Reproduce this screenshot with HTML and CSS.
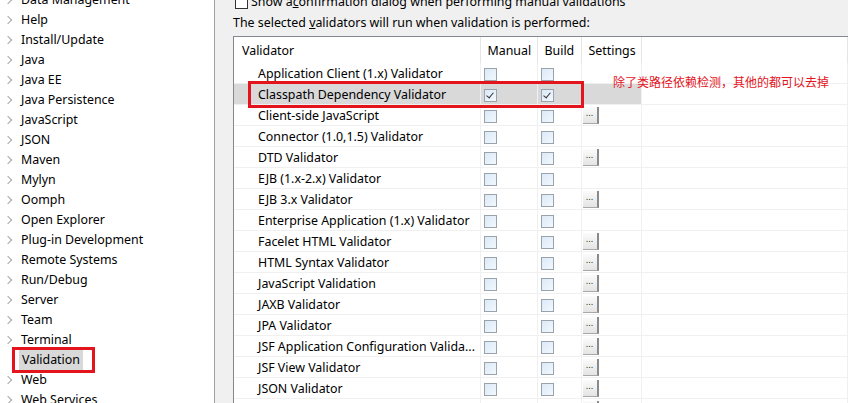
FILE: index.html
```html
<!DOCTYPE html>
<html lang="zh-CN">
<head>
    <meta charset="UTF-8">
    <title>Preferences - Validation</title>
    <link rel="stylesheet" href="styles.css">
</head>
<body>
    <div class="tree">
        <ul class="tree-list">
            <li><span class="chev"></span>Data Management</li>
            <li><span class="chev"></span>Help</li>
            <li><span class="chev"></span>Install/Update</li>
            <li><span class="chev"></span>Java</li>
            <li><span class="chev"></span>Java EE</li>
            <li><span class="chev"></span>Java Persistence</li>
            <li><span class="chev"></span>JavaScript</li>
            <li><span class="chev"></span>JSON</li>
            <li><span class="chev"></span>Maven</li>
            <li><span class="chev"></span>Mylyn</li>
            <li><span class="chev"></span>Oomph</li>
            <li><span class="chev"></span>Open Explorer</li>
            <li><span class="chev"></span>Plug-in Development</li>
            <li><span class="chev"></span>Remote Systems</li>
            <li><span class="chev"></span>Run/Debug</li>
            <li><span class="chev"></span>Server</li>
            <li><span class="chev"></span>Team</li>
            <li><span class="chev"></span>Terminal</li>
            <li class="leaf"><span class="sel-box"><span class="sel">Validation</span></span></li>
            <li><span class="chev"></span>Web</li>
            <li><span class="chev"></span>Web Services</li>
        </ul>
    </div>

    <div class="main">
        <div class="confirm"><span class="cb plain"></span>Show a <u>c</u>onfirmation dialog when performing manual validations</div>
        <div class="intro">The selected <u>v</u>alidators will run when validation is performed:</div>

        <div class="table-wrap">
            <table class="validators">
                <colgroup>
                    <col class="c-name">
                    <col class="c-manual">
                    <col class="c-build">
                    <col class="c-settings">
                    <col>
                </colgroup>
                <thead>
                    <tr>
                        <th class="first">Validator</th>
                        <th>Manual</th>
                        <th>Build</th>
                        <th>Settings</th>
                        <th></th>
                    </tr>
                </thead>
                <tbody id="rows"></tbody>
            </table>
            <div class="mark-row"></div>
            <div class="note">除了类路径依赖检测，其他的都可以去掉</div>
        </div>
    </div>

    <script>
        // Liste des validateurs : nom, coché, bouton de réglages
        const validators = [
            ['Application Client (1.x) Validator', false, false],
            ['Classpath Dependency Validator', true, false],
            ['Client-side JavaScript', false, true],
            ['Connector (1.0,1.5) Validator', false, false],
            ['DTD Validator', false, true],
            ['EJB (1.x-2.x) Validator', false, false],
            ['EJB 3.x Validator', false, true],
            ['Enterprise Application (1.x) Validator', false, false],
            ['Facelet HTML Validator', false, true],
            ['HTML Syntax Validator', false, true],
            ['JavaScript Validation', false, true],
            ['JAXB Validator', false, true],
            ['JPA Validator', false, true],
            ['JSF Application Configuration Valida...', false, true],
            ['JSF View Validator', false, true],
            ['JSON Validator', false, true],
            ['', false, true]
        ];

        const tbody = document.getElementById('rows');
        validators.forEach(([name, checked, settings]) => {
            const row = document.createElement('tr');
            if (checked) row.className = 'selected';
            const cb = checked ? '<span class="cb on"></span>' : '<span class="cb"></span>';
            row.innerHTML = `
                <td class="name">${name}</td>
                <td>${cb}</td>
                <td>${cb}</td>
                <td>${settings ? '<span class="dots">...</span>' : ''}</td>
                <td></td>
            `;
            tbody.appendChild(row);
        });
    </script>
</body>
</html>
```

FILE: styles.css
```css
body {
    margin: 0;
    width: 848px;
    height: 403px;
    overflow: hidden;
    display: flex;
    font-family: "Noto Sans", "Noto Sans CJK SC", sans-serif;
    font-size: 12.4px;
    color: #000;
    background: #f0f0f0;
}
.tree {
    width: 214px;
    flex: none;
    background: #fff;
    border-right: 1px solid #a0a0a0;
}
.tree-list {
    list-style: none;
    margin: -10px 0 0 0;
    padding: 0;
}
.tree-list li {
    height: 20px;
    line-height: 20px;
    display: flex;
    align-items: center;
    padding-left: 4px;
    white-space: nowrap;
}
.chev {
    width: 5px;
    height: 5px;
    border-right: 1.3px solid #a6a6a6;
    border-top: 1.3px solid #a6a6a6;
    transform: rotate(45deg);
    margin: 0 10px 0 1px;
}
.tree-list .leaf {
    padding-left: 12px;
}
.sel-box {
    border: 3px solid #e3141c;
    padding: 0 9px 0 4px;
    height: 20px;
    display: flex;
    align-items: center;
}
.sel {
    background: #d9d9d9;
    padding: 0 3px;
    line-height: 20px;
}
.main {
    flex: 1;
    padding-left: 18px;
    min-width: 0;
}
.confirm {
    margin-top: -8px;
    height: 20px;
    line-height: 20px;
    display: flex;
    align-items: center;
    padding-left: 2px;
}
.confirm .cb {
    margin-right: 3px;
}
.intro {
    height: 20px;
    line-height: 20px;
    margin-top: 1px;
}
.table-wrap {
    position: relative;
    margin-top: 3px;
    border-left: 1px solid #828790;
    border-top: 1px solid #828790;
    background: #fff;
    height: 400px;
}
.validators {
    border-collapse: collapse;
    table-layout: fixed;
    width: 100%;
}
.c-name { width: 246px; }
.c-manual { width: 57px; }
.c-build { width: 44px; }
.c-settings { width: 60px; }
.validators th {
    height: 26px;
    font-weight: normal;
    text-align: left;
    padding: 0 0 0 7px;
    border-right: 1px solid #e5e5e5;
}
.validators th.first {
    padding-left: 8px;
}
.validators td {
    height: 20px;
    padding: 0 0 0 3px;
    border-bottom: 1px solid #f0f0f0;
    border-right: 1px solid #f0f0f0;
    white-space: nowrap;
    overflow: hidden;
}
.validators td.name {
    padding-left: 24px;
}
.validators tr.selected td {
    background: #d9d9d9;
}
.validators tr.selected td:last-child {
    background: #fff;
}
.cb {
    display: inline-block;
    width: 11px;
    height: 11px;
    border: 1px solid #9aa3ab;
    background: linear-gradient(135deg, #dbe9f7, #f2f8fd);
    vertical-align: middle;
    position: relative;
}
.cb.plain {
    background: #fff;
    border-color: #333;
}
.cb.on::after {
    content: "";
    position: absolute;
    left: 3px;
    top: 1px;
    width: 3px;
    height: 6px;
    border-right: 1.5px solid #333;
    border-bottom: 1.5px solid #333;
    transform: rotate(40deg);
}
.dots {
    display: inline-block;
    width: 14px;
    height: 16px;
    line-height: 14px;
    text-align: center;
    font-family: "DejaVu Sans", sans-serif;
    font-size: 8px;
    color: #222;
    background: linear-gradient(#fbfbfb, #e4e4e4);
    border-right: 2px solid #8a8a8a;
    border-bottom: 1px solid #a8a8a8;
    vertical-align: middle;
    letter-spacing: 0;
    margin-left: -2px;
    overflow: hidden;
}
.mark-row {
    position: absolute;
    left: 14px;
    top: 44px;
    width: 330px;
    height: 21px;
    border: 3px solid #e3141c;
}
.note {
    position: absolute;
    left: 379px;
    top: 37px;
    color: #e3141c;
    font-family: "Noto Sans CJK SC", sans-serif;
    font-size: 12px;
    line-height: 16px;
    white-space: nowrap;
}
```
